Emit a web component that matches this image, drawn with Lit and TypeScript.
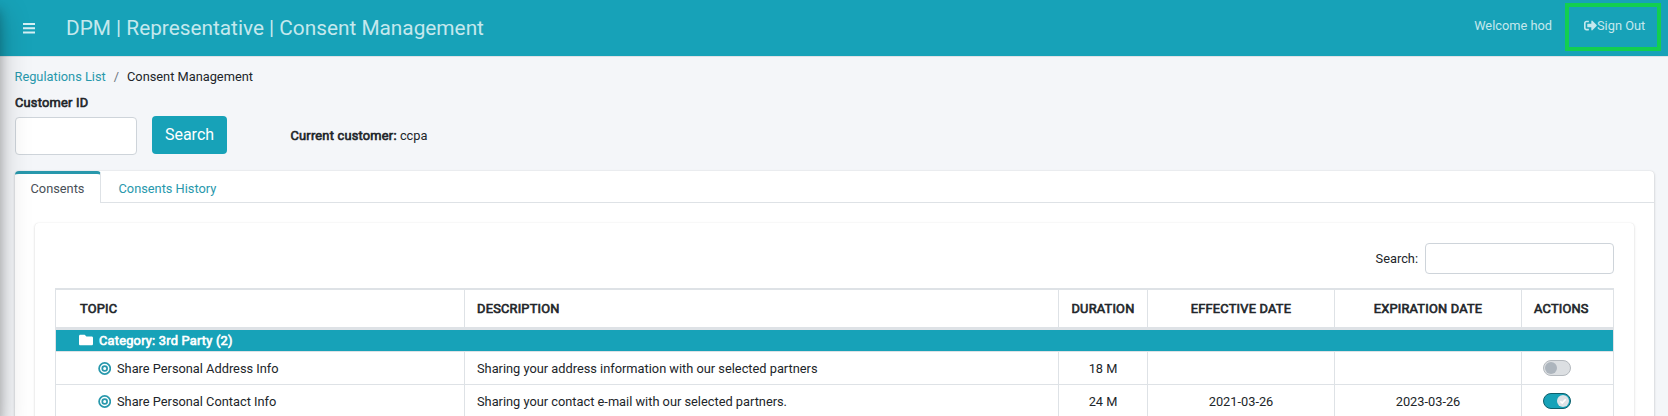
import { LitElement, html, css, svg, nothing } from "lit";
import { customElement, property } from "lit/decorators.js";
import { classMap } from "lit/directives/class-map.js";

interface Consent {
  topic: string;
  description: string;
  duration: string;
  effective: string;
  expiration: string;
  enabled: boolean;
}

const consents: Consent[] = [
  {
    topic: "Share Personal Address Info",
    description: "Sharing your address information with our selected partners",
    duration: "18 M",
    effective: "",
    expiration: "",
    enabled: false,
  },
  {
    topic: "Share Personal Contact Info",
    description: "Sharing your contact e-mail with our selected partners.",
    duration: "24 M",
    effective: "2021-03-26",
    expiration: "2023-03-26",
    enabled: true,
  },
];

@customElement("toggle-switch")
export class ToggleSwitch extends LitElement {
  @property({ type: Boolean }) on = false;

  static styles = css`
    :host {
      display: block;
    }
    .track {
      box-sizing: border-box;
      display: flex;
      align-items: center;
      width: 28px;
      height: 16px;
      padding: 0 1px;
      border: 1px solid #b4b9be;
      border-radius: 8px;
      background: #dcdfe2;
    }
    .track.on {
      justify-content: flex-end;
      border-color: #0d5f6b;
      background: #17a2b8;
    }
    .knob {
      width: 12px;
      height: 12px;
      border-radius: 50%;
      background: #adb5bd;
    }
    .on .knob {
      background: #dee2e6;
    }
    svg {
      display: block;
    }
  `;

  render() {
    return html`<div class=${classMap({ track: true, on: this.on })}>
      <div class="knob">
        ${this.on
          ? html`<svg width="12" height="12" viewBox="0 0 12 12">
              <path d="M3.400 6.200 5.200 8 8.700 4.300" fill="none" stroke="#fff" stroke-width="1.6" />
            </svg>`
          : nothing}
      </div>
    </div>`;
  }
}

@customElement("app-root")
export class AppRoot extends LitElement {
  static styles = css`
    :host {
      display: block;
      position: relative;
      height: 416px;
      overflow: hidden;
      background: #f4f6f9;
      color: #212529;
      font: 12.8px/20px Roboto, sans-serif;
    }
    * {
      box-sizing: border-box;
    }
    svg {
      display: block;
      flex: none;
    }
    .sidebar-shadow {
      position: absolute;
      top: 0;
      bottom: 0;
      left: -250px;
      width: 250px;
      box-shadow: 0 14px 28px rgba(0, 0, 0, 0.25), 0 10px 10px rgba(0, 0, 0, 0.22);
    }
    .navbar {
      display: flex;
      align-items: flex-start;
      height: 57px;
      padding: 0 7px 0 23px;
      border-bottom: 1px solid #dee2e6;
      background: #17a2b8;
      color: #c5e8ed;
    }
    .menu {
      margin-top: 23px;
    }
    .title {
      flex: 1;
      margin-left: 31px;
      font-size: 20.8px;
      line-height: 56px;
      white-space: nowrap;
    }
    .welcome {
      margin: 16px 13px 0 0;
    }
    .signout {
      display: flex;
      align-items: flex-start;
      width: 96px;
      height: 48px;
      margin-top: 3px;
      padding: 9px 0 0 15px;
      border: 4px solid #12cf50;
      white-space: nowrap;
    }
    .signout svg {
      margin-top: 3px;
    }
    .breadcrumb {
      display: flex;
      gap: 8px;
      padding: 10px 14.5px 0;
    }
    .link {
      color: #2898ac;
    }
    .separator {
      color: #6c757d;
    }
    .strong {
      -webkit-text-stroke: 0.65px currentColor;
      letter-spacing: 0.23px;
    }
    .label {
      padding: 6px 15px 4px;
    }
    .lookup {
      display: flex;
      align-items: center;
      height: 38px;
      margin: -1px 15px 17px;
    }
    .current {
      margin-top: 2px;
    }
    .box {
      border: 1px solid #ced4da;
      border-radius: 4px;
      background: #fff;
      font: inherit;
      padding: 0 8px;
      outline: none;
    }
    .customer {
      width: 122px;
      height: 38px;
      margin-top: 2px;
    }
    .button {
      width: 75px;
      height: 38px;
      margin: 0 63.5px 0 15px;
      padding: 0;
      border: 0;
      border-radius: 4px;
      background: #17a2b8;
      color: #fff;
      font: 16px/38px Roboto, sans-serif;
    }
    .card {
      height: 300px;
      margin: 0 14px 0 15px;
      border-radius: 4px;
      background: #fff;
      box-shadow: 0 0 1px rgba(0, 0, 0, 0.13), 0 1px 3px rgba(0, 0, 0, 0.2);
    }
    .tabs {
      display: flex;
      height: 32px;
    }
    .tab {
      width: 86px;
      border-top: 3px solid #2898ac;
      border-right: 1px solid #dee2e6;
      border-radius: 4px 4px 0 0;
      color: #495057;
      line-height: 29px;
      text-align: center;
    }
    .tab-rest {
      flex: 1;
      padding: 3px 17.5px 0;
      border-bottom: 1px solid #dee2e6;
      line-height: 29px;
    }
    .panel {
      height: 260px;
      margin: 20px 20px 0;
      padding: 20px 20px 0;
      border-radius: 4px;
      box-shadow: 0 0 1px rgba(0, 0, 0, 0.1), 0 1px 3px rgba(0, 0, 0, 0.16);
    }
    .filter {
      display: flex;
      justify-content: flex-end;
      align-items: center;
      gap: 7px;
      height: 31px;
      margin-bottom: 14px;
    }
    .filter-box {
      width: 189px;
      height: 31px;
    }
    .table {
      border: 1px solid #dee2e6;
      border-top-width: 2px;
      border-bottom: 0;
    }
    .row {
      display: grid;
      grid-template-columns: 409px 594px 89px 187px 187px 1fr;
      height: 33px;
      border-bottom: 1px solid #dee2e6;
      line-height: 20px;
    }
    .cell {
      display: flex;
      align-items: center;
      padding: 2px 0 0 12px;
      border-right: 1px solid #dee2e6;
      white-space: nowrap;
    }
    .cell:last-child {
      border-right: 0;
    }
    .head {
      height: 40px;
      border-bottom: 3px solid #dee2e6;
    }
    .head .cell {
      padding-top: 1px;
    }
    .center {
      justify-content: center;
      padding-left: 0;
    }
    .topic-head {
      padding-left: 24px;
    }
    .topic {
      gap: 6px;
      padding-left: 42px;
    }
    .topic svg {
      margin-bottom: 2px;
    }
    .action {
      padding: 0 0 0 21px;
    }
    .category {
      display: flex;
      align-items: center;
      gap: 6px;
      height: 22px;
      padding-left: 23px;
      border-bottom: 1px solid #dee2e6;
      background: #17a2b8;
      color: #fff;
    }
    .category svg {
      margin-bottom: 1px;
      stroke: none;
    }
  `;

  private targetIcon = html`<svg width="13" height="13" viewBox="0 0 13 13">
    ${svg`<g fill="none" stroke="#2898ac" stroke-width="1.75">
      <circle cx="6.7" cy="6.5" r="5.6" /><circle cx="6.7" cy="6.5" r="2.4" />
    </g>`}
  </svg>`;

  private renderRow(c: Consent) {
    return html`<div class="row">
      <div class="cell topic">${this.targetIcon}<span>${c.topic}</span></div>
      <div class="cell">${c.description}</div>
      <div class="cell center">${c.duration}</div>
      <div class="cell center">${c.effective}</div>
      <div class="cell center">${c.expiration}</div>
      <div class="cell action"><toggle-switch ?on=${c.enabled}></toggle-switch></div>
    </div>`;
  }

  render() {
    return html`
      <header class="navbar">
        <svg class="menu" width="12" height="11" viewBox="0 0 12 11">
          <path d="M0 1h12M0 5.300h12M0 9.600h12" stroke="#d6f0f4" stroke-width="2" />
        </svg>
        <div class="title">DPM | Representative | Consent Management</div>
        <div class="welcome">Welcome hod</div>
        <div class="signout">
          <svg width="13" height="13" viewBox="0 0 512 512" fill="currentColor">
            <path
              d="M497 273 329 441c-15 15-41 4.500-41-17v-96H152c-13.300 0-24-10.700-24-24v-96c0-13.300 10.700-24 24-24h136V88c0-21.400 25.900-32 41-17l168 168c9.300 9.400 9.300 24.600 0 34zM192 436v-40c0-6.600-5.400-12-12-12H96c-17.700 0-32-14.300-32-32V160c0-17.700 14.300-32 32-32h84c6.600 0 12-5.400 12-12V76c0-6.600-5.400-12-12-12H96c-53 0-96 43-96 96v192c0 53 43 96 96 96h84c6.600 0 12-5.400 12-12z"
            />
          </svg>
          <span>Sign Out</span>
        </div>
      </header>
      <nav class="breadcrumb">
        <span class="link">Regulations List</span>
        <span class="separator">/</span>
        <span>Consent Management</span>
      </nav>
      <div class="label strong">Customer ID</div>
      <div class="lookup">
        <input class="box customer" />
        <button class="button">Search</button>
        <span class="current"><span class="strong">Current customer:</span> ccpa</span>
      </div>
      <section class="card">
        <div class="tabs">
          <div class="tab">Consents</div>
          <div class="tab-rest"><span class="link">Consents History</span></div>
        </div>
        <div class="panel">
          <div class="filter"><span>Search:</span><input class="box filter-box" /></div>
          <div class="table">
            <div class="row head strong">
              <div class="cell topic-head">TOPIC</div>
              <div class="cell">DESCRIPTION</div>
              <div class="cell center">DURATION</div>
              <div class="cell center">EFFECTIVE DATE</div>
              <div class="cell center">EXPIRATION DATE</div>
              <div class="cell">ACTIONS</div>
            </div>
            <div class="category strong">
              <svg width="14" height="14" viewBox="0 0 512 512" fill="#fff">
                <path
                  d="M464 128H272l-64-64H48C21.500 64 0 85.500 0 112v288c0 26.500 21.500 48 48 48h416c26.500 0 48-21.500 48-48V176c0-26.500-21.500-48-48-48z"
                />
              </svg>
              <span>Category: 3rd Party (2)</span>
            </div>
            ${consents.map((c) => this.renderRow(c))}
          </div>
        </div>
      </section>
      <div class="sidebar-shadow"></div>
    `;
  }
}
